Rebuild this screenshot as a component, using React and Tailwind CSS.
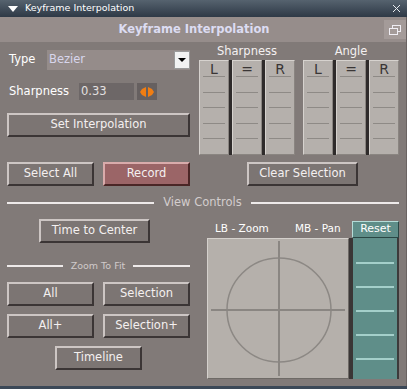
import { useState } from "react";

const Btn = ({ children, className = "", red = false }) => (
  <button
    className={
      "h-[24px] flex items-center justify-center border-2 text-[#f4f0f0] text-[11.5px] leading-none " +
      (red
        ? "bg-[#9b6567] border-t-[#d9abab] border-l-[#d9abab] border-b-[#4a2626] border-r-[#4a2626] "
        : "bg-[#7c7573] border-t-[#cdc6c4] border-l-[#cdc6c4] border-b-[#3b3535] border-r-[#3b3535] ") +
      className
    }
  >
    {children}
  </button>
);

const Column = ({ label }) => (
  <div className="flex-1 flex flex-col bg-[#b5b0ac] border border-t-[#d6d2ce] border-l-[#d6d2ce] border-b-[#8a8581] border-r-[#8a8581]">
    <div className="h-[16px] mx-[3px] border-b border-[#8e8a86] text-center text-[#3a3636] text-[14px] leading-[16px]">
      {label}
    </div>
    {[0, 1, 2, 3].map((i) => (
      <div key={i} className="h-[15.5px] mx-[3px] border-b border-[#8e8a86]" />
    ))}
    <div className="flex-1" />
  </div>
);

const Table = ({ title }) => (
  <div className="w-[96px] flex flex-col">
    <div className="h-[18px] text-center text-[#f4f0f0] text-[11.5px] leading-[18px]">{title}</div>
    <div className="h-[95px] flex gap-[3px] bg-[#2f2b2b]">
      <Column label="L" />
      <Column label="=" />
      <Column label="R" />
    </div>
  </div>
);

export default function App() {
  const [type] = useState("Bezier");

  return (
    <div className="w-[407px] h-[389px] flex flex-col bg-[#817a78] font-['DejaVu_Sans',sans-serif] overflow-hidden select-none">
      {/* window title bar */}
      <div className="h-[17px] flex items-center bg-linear-to-b from-[#56636f] to-[#2e3946] text-white text-[9.5px]">
        <svg width="10" height="6" viewBox="0 0 10 6" className="ml-[8px] mr-[7px]">
          <polygon points="0,0 10,0 5,6" fill="#ffffff" />
        </svg>
        <span>Keyframe Interpolation</span>
        <svg width="9" height="9" viewBox="0 0 9 9" className="ml-auto mr-[6px]">
          <path d="M1 1 L8 8 M8 1 L1 8" stroke="#e8ecf0" strokeWidth="1" />
        </svg>
      </div>

      <div className="flex-1 flex">
        <div className="flex-1 flex flex-col">
          {/* header band */}
          <div className="h-[25px] flex items-center bg-[#968d8b]">
            <div className="flex-1 text-center font-bold text-[11.5px] text-[#dcdcf2] pl-[4px]">
              Keyframe Interpolation
            </div>
            <div className="w-[22px] h-[19px] flex items-center justify-center bg-[#a49b99]">
              <svg width="12" height="10" viewBox="0 0 12 10">
                <rect x="3.5" y="0.5" width="8" height="6" fill="none" stroke="#f0eef4" />
                <rect x="0.5" y="3.5" width="8" height="6" fill="#a49b99" stroke="#f0eef4" />
              </svg>
            </div>
          </div>

          <div className="flex-1 flex flex-col px-[7px]">
            {/* top section */}
            <div className="flex gap-[9px]">
              <div className="w-[183px] flex flex-col">
                <div className="mt-[8px] h-[20px] flex items-center">
                  <span className="w-[40px] pl-[2px] text-[11.5px] text-white">Type</span>
                  <div className="flex-1 h-[20px] flex items-center bg-[#958c8a]">
                    <span className="pl-[2px] text-[11.5px] text-[#d8d6ec]">{type}</span>
                    <div className="ml-auto w-[16px] h-[18px] flex items-center justify-center bg-[#f2f2f2] border border-[#9a9a9a]">
                      <svg width="8" height="4" viewBox="0 0 8 4">
                        <polygon points="0,0 8,0 4,4" fill="#000" />
                      </svg>
                    </div>
                  </div>
                </div>
                <div className="mt-[13px] h-[17px] flex items-center">
                  <span className="w-[72px] pl-[2px] text-[11.5px] text-white">Sharpness</span>
                  <div className="w-[55px] h-[17px] flex items-center bg-[#6d6767] pl-[2px] text-[11.5px] text-[#e4e0e0]">
                    0.33
                  </div>
                  <div className="ml-[3px] w-[20px] h-[17px] flex items-center justify-center bg-[#666060]">
                    <svg width="14" height="10" viewBox="0 0 14 10">
                      <polygon points="0,5 2,2 4,1 6,0 6,10 4,9 2,8" fill="#f07d12" />
                      <polygon points="14,5 12,2 10,1 8,0 8,10 10,9 12,8" fill="#f07d12" />
                    </svg>
                  </div>
                </div>
                <Btn className="mt-[13px] w-[183px]">Set Interpolation</Btn>
              </div>

              <div className="flex gap-[8px]">
                <Table title="Sharpness" />
                <Table title="Angle" />
              </div>
            </div>

            {/* action row */}
            <div className="mt-[7px] flex">
              <Btn className="w-[87px]">Select All</Btn>
              <Btn red className="w-[87px] ml-[9px]">Record</Btn>
              <Btn className="w-[111px] ml-[57px]">Clear Selection</Btn>
            </div>

            {/* view controls divider */}
            <div className="mt-[10px] h-[14px] flex items-center">
              <div className="w-[147px] h-[2px] bg-[#eeeaea]" />
              <span className="flex-1 text-center text-[11.5px] text-[#d3cdcd]">View Controls</span>
              <div className="w-[148px] h-[2px] bg-[#eeeaea]" />
            </div>

            {/* bottom section */}
            <div className="flex gap-[9px]">
              <div className="w-[183px] flex flex-col">
                <Btn className="mt-[9px] ml-[32px] w-[111px]">Time to Center</Btn>
                <div className="mt-[17px] h-[12px] flex items-center">
                  <div className="w-[56px] h-[2px] bg-[#eeeaea]" />
                  <span className="flex-1 text-center text-[9.5px] text-[#d0caca]">Zoom To Fit</span>
                  <div className="w-[57px] h-[2px] bg-[#eeeaea]" />
                </div>
                <div className="mt-[10px] flex gap-[9px]">
                  <Btn className="w-[87px]">All</Btn>
                  <Btn className="w-[87px]">Selection</Btn>
                </div>
                <div className="mt-[8px] flex gap-[9px]">
                  <Btn className="w-[87px]">All+</Btn>
                  <Btn className="w-[87px]">Selection+</Btn>
                </div>
                <Btn className="mt-[8px] ml-[48px] w-[87px]">Timeline</Btn>
              </div>

              <div className="flex-1 flex flex-col pl-[8px]">
                <div className="mt-[10px] h-[18px] flex items-center text-[10.5px] text-white">
                  <span className="ml-[8px] w-[80px]">LB - Zoom</span>
                  <span>MB - Pan</span>
                  <div className="ml-auto w-[47px] h-[17px] flex items-center justify-center bg-[#5f8e89] border border-t-[#b4dcd8] border-l-[#b4dcd8] border-b-[#2a4644] border-r-[#2a4644] text-[11px]">
                    Reset
                  </div>
                </div>
                <div className="h-[141px] flex">
                  <div className="w-[142px] bg-[#b5b0ab] border border-t-[#d4d0cc] border-l-[#d4d0cc] border-b-[#6e6a66] border-r-[#6e6a66]">
                    <svg width="140" height="139" viewBox="0 0 140 139">
                      <circle cx="71" cy="71" r="52" fill="none" stroke="#8c8884" strokeWidth="1.5" />
                      <line x1="71" y1="2" x2="71" y2="137" stroke="#8a8682" strokeWidth="2" />
                      <line x1="3" y1="71" x2="137" y2="71" stroke="#8a8682" strokeWidth="2" />
                    </svg>
                  </div>
                  <div className="w-[4px] bg-[#3a3636]" />
                  <div className="flex-1 flex flex-col bg-[#5f8e89] border-r-2 border-[#3c3a3a]">
                    {[0, 1, 2, 3, 4].map((i) => (
                      <div key={i} className="mt-[22px] first:mt-[24px] mx-[3px] h-[2px] bg-[#a4cfca]" />
                    ))}
                  </div>
                </div>
              </div>
            </div>
          </div>
        </div>
        <div className="w-[3px] bg-[#6a6362]" />
      </div>
      <div className="h-[3px] bg-[#3b4857]" />
    </div>
  );
}
